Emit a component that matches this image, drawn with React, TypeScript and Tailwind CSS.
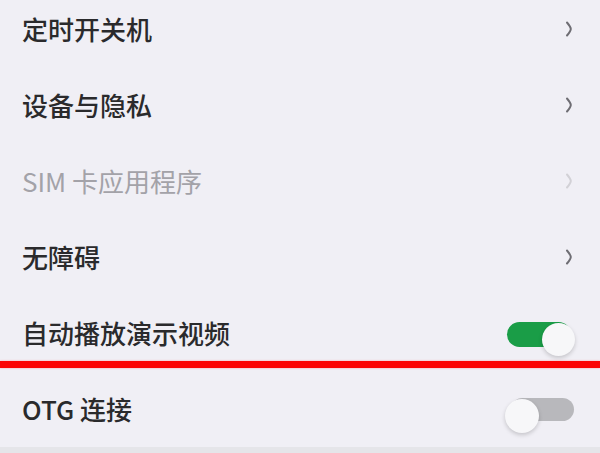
const rows = [
  { label: "定时开关机", kind: "link" },
  { label: "设备与隐私", kind: "link" },
  { label: "SIM 卡应用程序", kind: "link", disabled: true },
  { label: "无障碍", kind: "link" },
  { label: "自动播放演示视频", kind: "switch", on: true },
] as const;

function Chevron({ faded }: { faded?: boolean }) {
  return (
    <svg width="8" height="16" viewBox="0 0 8 16" className="block">
      <path
        d="M2 1.5 C4.5 4.5 5.8 6.5 5.8 8 C5.8 9.5 4.5 11.5 2 14.5"
        fill="none"
        stroke={faded ? "#d2d1d6" : "#6e6d73"}
        strokeWidth="2"
        strokeLinecap="round"
      />
    </svg>
  );
}

function Switch({ on }: { on: boolean }) {
  return (
    <div className="relative h-[34px] w-[68px]">
      {on ? (
        <>
          <div className="absolute left-0 top-[6px] h-[25px] w-[64px] rounded-full bg-[#1a9d47]" />
          <div className="absolute right-0 top-[7px] h-[33px] w-[33px] rounded-full bg-[#f7f7f9] shadow-[0_2px_4px_rgba(0,0,0,0.18)]" />
        </>
      ) : (
        <>
          <div className="absolute left-[4px] top-[6px] h-[23px] w-[63px] rounded-full bg-[#b8b8bc]" />
          <div className="absolute left-[-2px] top-[7px] h-[34px] w-[34px] rounded-full bg-[#f7f7f9] shadow-[0_2px_4px_rgba(0,0,0,0.18)]" />
        </>
      )}
    </div>
  );
}

export default function App() {
  return (
    <div
      className="relative h-[453px] w-[600px] overflow-hidden bg-[#f0eff5]"
      style={{ fontFamily: '"Noto Sans CJK SC", "Noto Sans", sans-serif' }}
    >
      <div className="-mt-[9px] flex flex-col">
        {rows.map((row) => (
          <div
            key={row.label}
            className="flex h-[76px] items-center justify-between pl-[22px] pr-[25px]"
          >
            <span
              className={`text-[26px] leading-none ${
                "disabled" in row && row.disabled
                  ? "font-normal text-[#a3a2a8]"
                  : "font-medium text-[#2a2a2c]"
              }`}
            >
              {row.label}
            </span>
            {row.kind === "link" ? (
              <div className="pr-[2px]">
                <Chevron faded={"disabled" in row && row.disabled} />
              </div>
            ) : (
              <Switch on={row.on} />
            )}
          </div>
        ))}
        <div className="flex h-[76px] items-center justify-between pl-[22px] pr-[25px]">
          <span className="text-[26px] font-medium leading-none text-[#2a2a2c]">OTG 连接</span>
          <Switch on={false} />
        </div>
        <div className="h-[10px] bg-[#e5e5e9]" />
      </div>
      <div className="absolute left-0 top-[361px] h-[7px] w-full bg-[#fb0303] shadow-[0_0_2px_rgba(255,80,80,0.6)]" />
    </div>
  );
}
